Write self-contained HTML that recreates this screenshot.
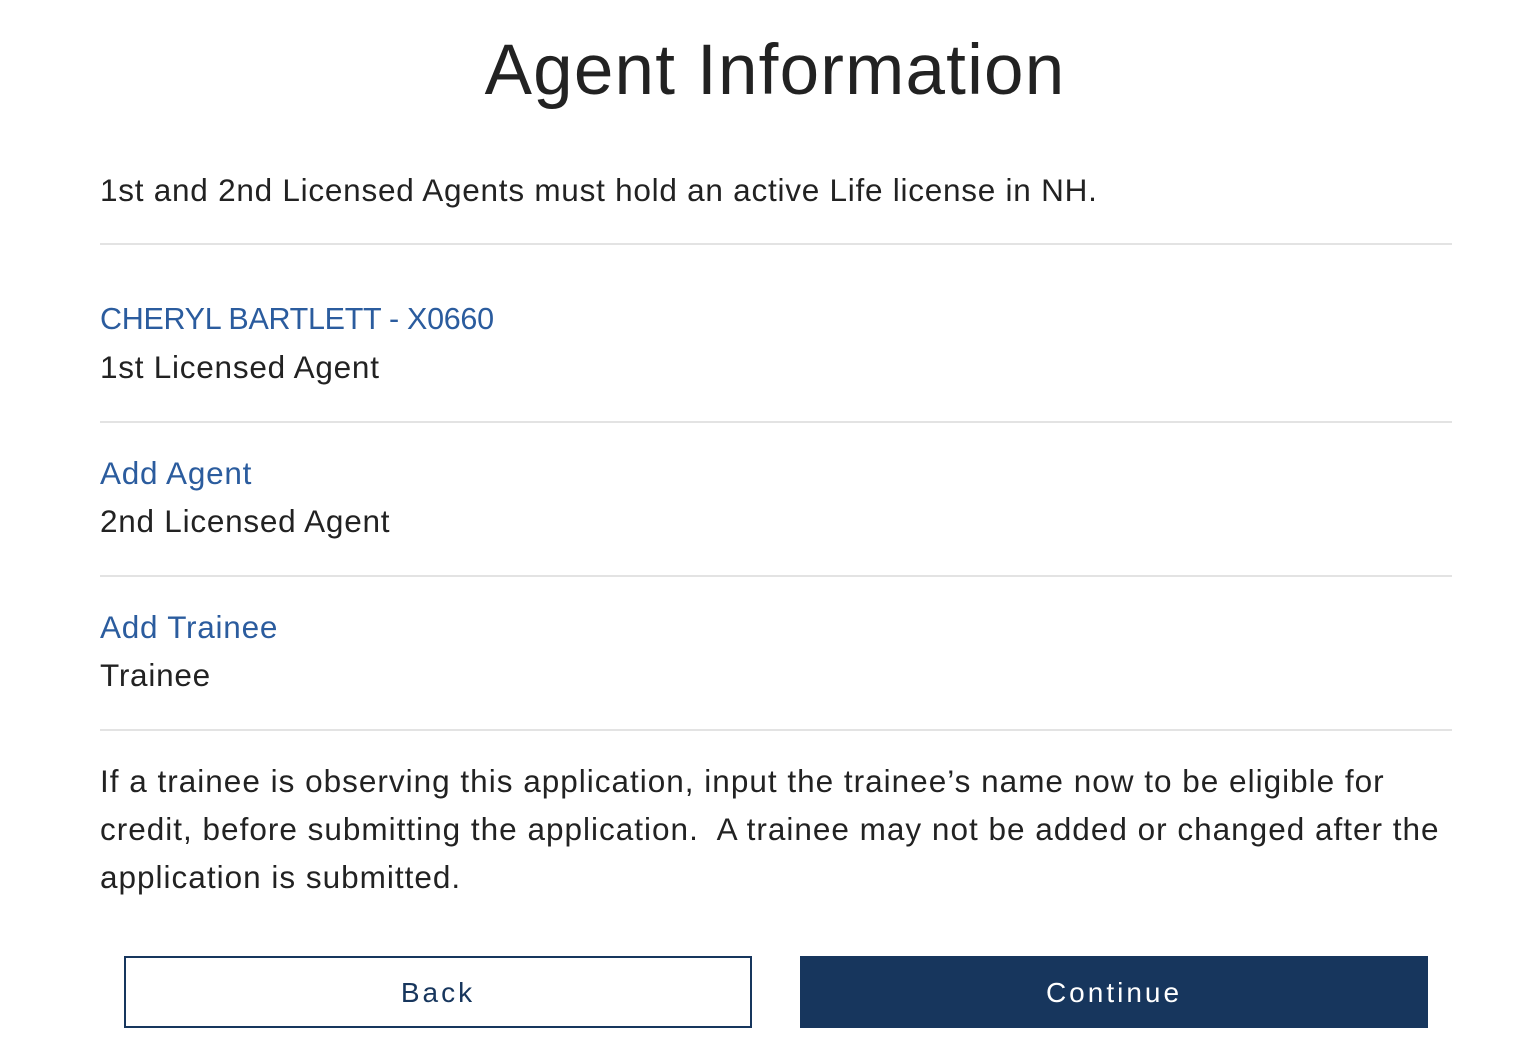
<!DOCTYPE html>
<html><head><meta charset="utf-8"><style>
body{margin:0;width:1528px;height:1054px;background:#fff;font-family:"Liberation Sans",Arial,sans-serif;color:#222;position:relative;overflow:hidden}
.t{position:absolute;left:100px;font-size:31.5px;line-height:48px;white-space:nowrap;letter-spacing:0.75px}
.b{color:#2b5c9e}
.hr{position:absolute;left:100px;width:1352px;height:2px;background:#e3e3e3}
h1{position:absolute;top:31px;left:0;width:1550px;margin:0;text-align:center;font-weight:normal;font-size:71px;line-height:80px;letter-spacing:1.2px;color:#222}
.btn{position:absolute;top:956px;width:628px;height:72px;box-sizing:border-box;font-size:28px;letter-spacing:3px;display:flex;align-items:center;justify-content:center;padding-top:2px}
</style></head><body>
<h1>Agent Information</h1>
<div class="t" style="top:166px">1st and 2nd Licensed Agents must hold an active Life license in NH.</div>
<div class="hr" style="top:243px"></div>
<div class="t b" style="top:295px;font-size:30.5px;letter-spacing:-0.3px">CHERYL BARTLETT - X0660</div>
<div class="t" style="top:343px">1st Licensed Agent</div>
<div class="hr" style="top:421px"></div>
<div class="t b" style="top:449px">Add Agent</div>
<div class="t" style="top:497px">2nd Licensed Agent</div>
<div class="hr" style="top:575px"></div>
<div class="t b" style="top:603px">Add Trainee</div>
<div class="t" style="top:651px">Trainee</div>
<div class="hr" style="top:729px"></div>
<div class="t" style="top:757px;letter-spacing:1.0px">If a trainee is observing this application, input the trainee’s name now to be eligible for<br>credit, before submitting the application.&nbsp; A trainee may not be added or changed after the<br>application is submitted.</div>
<div class="btn" style="left:124px;border:2px solid #17365d;color:#17365d">Back</div>
<div class="btn" style="left:800px;background:#17365d;color:#fff">Continue</div>
</body></html>
